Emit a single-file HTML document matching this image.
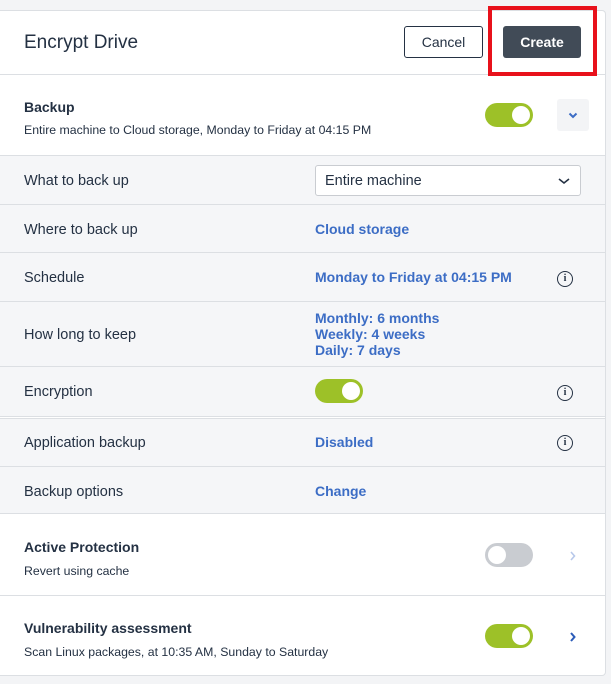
<!DOCTYPE html>
<html><head><style>
*{box-sizing:border-box;margin:0;padding:0}
body{width:611px;height:684px;background:#f3f4f6;font-family:"Liberation Sans",sans-serif;color:#243143;position:relative;overflow:hidden}
.card{position:absolute;left:0;top:10px;width:606px;height:666px;background:#fff;border:1px solid #dcdfe3;border-left:none;border-radius:0 4px 4px 0}
.abs{position:absolute}
.row{position:absolute;left:0;width:605px;background:#f5f6f8;border-top:1px solid #dcdfe3}
.lbl{position:absolute;left:24px;font-size:14.5px;color:#243143;margin-top:1px}
.val{position:absolute;left:315px;font-size:14px;font-weight:bold;color:#3c6dc5}
.tog{position:absolute;width:48px;height:24px;border-radius:12px;background:#9dc128}
.tog::after{content:"";position:absolute;top:3px;right:3px;width:18px;height:18px;border-radius:50%;background:#fff}
.tog.off{background:#c9ccd1}
.tog.off::after{left:3px;right:auto}
.info{position:absolute;left:557px;width:16px;height:16px;border:1.6px solid #243143;border-radius:50%;font-size:10px;font-weight:bold;text-align:center;line-height:13px;font-family:"Liberation Serif",serif}
.t{position:absolute;left:24px;font-size:14px;font-weight:bold}
.s{position:absolute;left:24px;font-size:12.3px}
</style></head><body>
<div class="card"></div>
<div class="abs" style="left:0;top:74px;width:605px;border-top:1px solid #dcdfe3"></div>
<div class="abs" style="left:24px;top:32px;font-size:19px;color:#243143">Encrypt Drive</div>
<div class="abs" style="left:404px;top:26px;width:79px;height:32px;border:1px solid #243143;border-radius:3px;font-size:14px;text-align:center;line-height:30px">Cancel</div>
<div class="abs" style="left:503px;top:26px;width:78px;height:32px;background:#414b57;border-radius:3px;color:#fff;font-size:14px;font-weight:bold;text-align:center;line-height:32px">Create</div>
<div class="abs" style="left:488px;top:6px;width:109px;height:70px;border:4px solid #e8111b"></div>
<div class="t" style="top:99px">Backup</div>
<div class="s" style="top:123px">Entire machine to Cloud storage, Monday to Friday at 04:15 PM</div>
<div class="tog" style="left:485px;top:103px"></div>
<div class="abs" style="left:557px;top:99px;width:32px;height:32px;background:#f3f4f6;border-radius:3px"><svg width="32" height="32"><path d="M12.5 14.5l3.5 3.5 3.5-3.5" stroke="#3c6dc5" stroke-width="2" fill="none"/></svg></div>

<div class="row" style="top:155px;height:49px"><div class="lbl" style="top:16px">What to back up</div>
<div class="abs" style="left:315px;top:9px;width:266px;height:31px;background:#fff;border:1px solid #c9ccd1;border-radius:3px;font-size:14.5px;line-height:30px;padding-left:9px">Entire machine<svg class="abs" style="right:10px;top:10px" width="12" height="10"><path d="M1 3l5 4 5-4" stroke="#243143" stroke-width="1.6" fill="none"/></svg></div></div>
<div class="row" style="top:204px;height:48px"><div class="lbl" style="top:16px">Where to back up</div><div class="val" style="top:16px">Cloud storage</div></div>
<div class="row" style="top:252px;height:49px"><div class="lbl" style="top:16px">Schedule</div><div class="val" style="top:16px">Monday to Friday at 04:15 PM</div><div class="info" style="top:18px">i</div></div>
<div class="row" style="top:301px;height:65px"><div class="lbl" style="top:24px">How long to keep</div><div class="val" style="top:8px;line-height:16px">Monthly: 6 months<br>Weekly: 4 weeks<br>Daily: 7 days</div></div>
<div class="row" style="top:366px;height:51px;border-bottom:1px solid #dcdfe3"><div class="lbl" style="top:16px">Encryption</div><div class="tog" style="left:315px;top:12px"></div><div class="info" style="top:18px">i</div></div>
<div class="row" style="top:418px;height:48px"><div class="lbl" style="top:15px">Application backup</div><div class="val" style="top:15px">Disabled</div><div class="info" style="top:16px">i</div></div>
<div class="row" style="top:466px;height:48px;border-bottom:1px solid #dcdfe3"><div class="lbl" style="top:16px">Backup options</div><div class="val" style="top:16px">Change</div></div>

<div class="t" style="top:539px">Active Protection</div>
<div class="s" style="top:564px">Revert using cache</div>
<div class="tog off" style="left:485px;top:543px"></div>
<svg class="abs" style="left:569px;top:550px" width="8" height="12"><path d="M2 2l3.5 4-3.5 4" stroke="#b7c8ea" stroke-width="1.6" fill="none"/></svg>
<div class="abs" style="left:0;top:595px;width:605px;border-top:1px solid #dcdfe3"></div>
<div class="t" style="top:620px">Vulnerability assessment</div>
<div class="s" style="top:645px">Scan Linux packages, at 10:35 AM, Sunday to Saturday</div>
<div class="tog" style="left:485px;top:624px"></div>
<svg class="abs" style="left:569px;top:631px" width="8" height="12"><path d="M2 2l3.5 4-3.5 4" stroke="#2b5cb8" stroke-width="2" fill="none"/></svg>
</body></html>
